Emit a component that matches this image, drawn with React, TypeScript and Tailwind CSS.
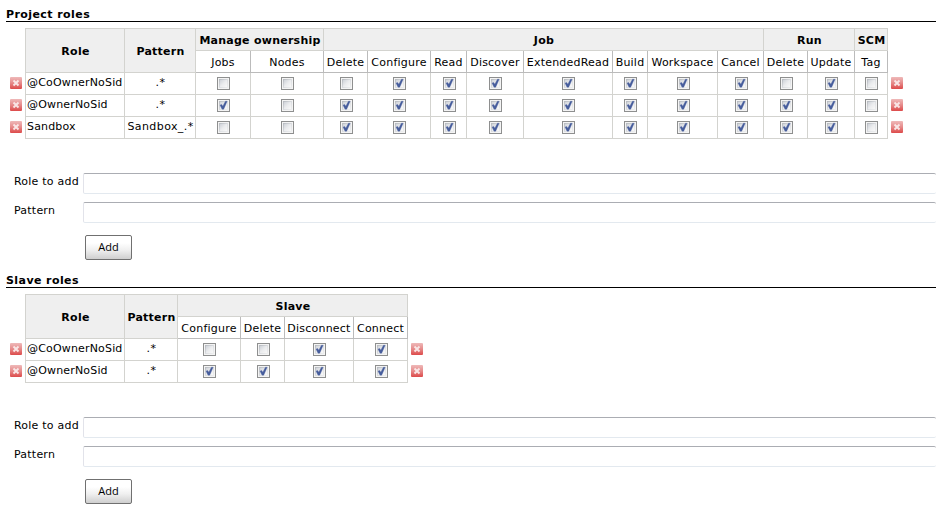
import React from 'react';

type Group = { name: string; permissions: string[] };
type Role = { name: string; pattern: string; granted: number[] };
type TableProps = { columns: string; groups: Group[]; roles: Role[] };

const projectGroups: Group[] = [
  { name: 'Manage ownership', permissions: ['Jobs', 'Nodes'] },
  { name: 'Job', permissions: ['Delete', 'Configure', 'Read', 'Discover', 'ExtendedRead', 'Build', 'Workspace', 'Cancel'] },
  { name: 'Run', permissions: ['Delete', 'Update'] },
  { name: 'SCM', permissions: ['Tag'] },
];

const projectRoles: Role[] = [
  { name: '@CoOwnerNoSid', pattern: '.*', granted: [0, 0, 0, 1, 1, 1, 1, 1, 1, 1, 0, 1, 0] },
  { name: '@OwnerNoSid', pattern: '.*', granted: [1, 0, 1, 1, 1, 1, 1, 1, 1, 1, 1, 1, 0] },
  { name: 'Sandbox', pattern: 'Sandbox_.*', granted: [0, 0, 1, 1, 1, 1, 1, 1, 1, 1, 1, 1, 0] },
];

const slaveGroups: Group[] = [
  { name: 'Slave', permissions: ['Configure', 'Delete', 'Disconnect', 'Connect'] },
];

const slaveRoles: Role[] = [
  { name: '@CoOwnerNoSid', pattern: '.*', granted: [0, 0, 1, 1] },
  { name: '@OwnerNoSid', pattern: '.*', granted: [1, 1, 1, 1] },
];

function Checkbox({ checked }: { checked: boolean }) {
  return (
    <svg width="13" height="13" viewBox="0 0 13 13" className="block shrink-0">
      <defs>
        <linearGradient id="box" x1="0" y1="0" x2="1" y2="1">
          <stop offset="0" stopColor="#cfd3d9" />
          <stop offset="0.5" stopColor="#ebecee" />
          <stop offset="1" stopColor="#f8f8f8" />
        </linearGradient>
        <linearGradient id="edge" x1="0" y1="0" x2="1" y2="1">
          <stop offset="0" stopColor="#b4b8be" />
          <stop offset="0.6" stopColor="#e0e2e5" />
          <stop offset="1" stopColor="#eeeff0" />
        </linearGradient>
      </defs>
      <rect width="13" height="13" fill="#8e8f8f" />
      <rect x="1" y="1" width="11" height="11" fill="#f4f4f4" />
      <rect x="2" y="2" width="9" height="9" fill="url(#edge)" />
      <rect x="3" y="3" width="7" height="7" fill="url(#box)" />
      {checked && <path d="M3 6 L4.8 5.6 L5.8 7.2 L8.4 2.2 L10.2 2.2 L6.7 10.2 L5 10.2 Z" fill="#465d9c" stroke="#465d9c" strokeWidth="0.3" />}
    </svg>
  );
}

function RemoveIcon() {
  return (
    <svg width="12" height="12" viewBox="0 0 12 12" className="block shrink-0">
      <defs>
        <linearGradient id="red" x1="0" y1="0" x2="0" y2="1">
          <stop offset="0" stopColor="#efb9b9" />
          <stop offset="0.5" stopColor="#e68a8a" />
          <stop offset="1" stopColor="#dd4a4a" />
        </linearGradient>
      </defs>
      <rect width="12" height="12" rx="1" fill="url(#red)" />
      <path d="M3.5 3.5 L8.5 8.5 M8.5 3.5 L3.5 8.5" stroke="#f9e6e6" strokeWidth="1.9" />
    </svg>
  );
}

function Heading({ children }: { children: React.ReactNode }) {
  return (
    <h2 className="ml-[6px] h-[15px] border-b border-black pt-[1px] leading-[13px] font-bold tracking-[0.42px]">
      {children}
    </h2>
  );
}

function RoleTable({ columns, groups, roles }: TableProps) {
  const header = 'flex items-center justify-center border-r border-b border-[#d3d3cf] bg-[#efefef] pl-[1px] font-bold tracking-[0.25px] whitespace-nowrap';
  return (
    <div className={`mt-[6px] grid w-max ${columns}`}>
      <div className="row-span-2 border-r border-[#d3d3cf]" />
      <div className={`${header} row-span-2 border-t pt-[2px]`}>Role</div>
      <div className={`${header} row-span-2 border-t pt-[2px]`}>Pattern</div>
      {groups.map((g) => (
        <div
          key={g.name}
          className={`${header} border-t pt-[2px]`}
          style={{ gridColumn: `span ${g.permissions.length}` }}
        >
          {g.name}
        </div>
      ))}
      <div className="row-span-2" />
      {groups.flatMap((g) =>
        g.permissions.map((p) => (
          <div key={g.name + p} className="flex items-center justify-center border-r border-b border-[#bbbbbb] pt-[2px] whitespace-nowrap">
            {p}
          </div>
        )),
      )}
      {roles.map((role) => (
        <React.Fragment key={role.name}>
          <div className="border-r border-[#d3d3cf] pt-[4px] pl-[10px]">
            <RemoveIcon />
          </div>
          <div className="border-r border-b border-[#d3d3cf] pt-[3px] pl-[1px] leading-[14px] tracking-[0.17px] whitespace-nowrap">{role.name}</div>
          <div className="border-r border-b border-[#d3d3cf] pt-[3px] pl-[1px] text-center leading-[14px] tracking-[0.4px] whitespace-nowrap">{role.pattern}</div>
          {role.granted.map((on, i) => (
            <div key={i} className="flex justify-center border-r border-b border-[#d3d3cf] pt-[4px] pl-[1px]">
              <Checkbox checked={on === 1} />
            </div>
          ))}
          <div className="pt-[4px] pl-[3px]">
            <RemoveIcon />
          </div>
        </React.Fragment>
      ))}
    </div>
  );
}

function AddForm() {
  const input = 'block h-[21px] w-full rounded-[2px] border border-r-0 border-t-[#abadb3] border-b-[#e3e9ef] border-l-[#e2e3ea] bg-white outline-none';
  return (
    <form className="mt-[34px]">
      {['Role to add', 'Pattern'].map((label) => (
        <label key={label} className="mb-[8px] grid grid-cols-[69px_1fr] pl-[14px]">
          <span className="pt-[2px] leading-[14px] whitespace-nowrap">{label}</span>
          <input className={input} />
        </label>
      ))}
      <button
        type="button"
        className="mt-[12px] ml-[85px] block h-[25px] w-[47px] rounded-[2px] border border-[#707070] bg-linear-to-b from-white from-30% via-[#f0f0f0] via-60% to-[#cfcfcf] pb-[2px] font-['Open_Sans','Noto_Sans',sans-serif] text-[11px] leading-[15px] tracking-normal"
      >
        Add
      </button>
    </form>
  );
}

export default function App() {
  return (
    <main className="h-[506px] w-full overflow-hidden bg-white pt-[7px] font-['DejaVu_Sans',Verdana,sans-serif] text-[11px] leading-[14px] tracking-[0.22px] text-black">
      <section className="h-[266px]">
        <Heading>Project roles</Heading>
        <RoleTable
          columns="grid-cols-[26px_99px_71px_55px_73px_44px_63px_36px_57px_89px_35px_70px_46px_44px_47px_33px_20px] grid-rows-[23px_22px_22px_22px_22px]"
          groups={projectGroups}
          roles={projectRoles}
        />
        <AddForm />
      </section>
      <section>
        <Heading>Slave roles</Heading>
        <RoleTable
          columns="grid-cols-[26px_99px_53px_63px_44px_69px_54px_20px] grid-rows-[23px_22px_22px_22px]"
          groups={slaveGroups}
          roles={slaveRoles}
        />
        <AddForm />
      </section>
    </main>
  );
}
